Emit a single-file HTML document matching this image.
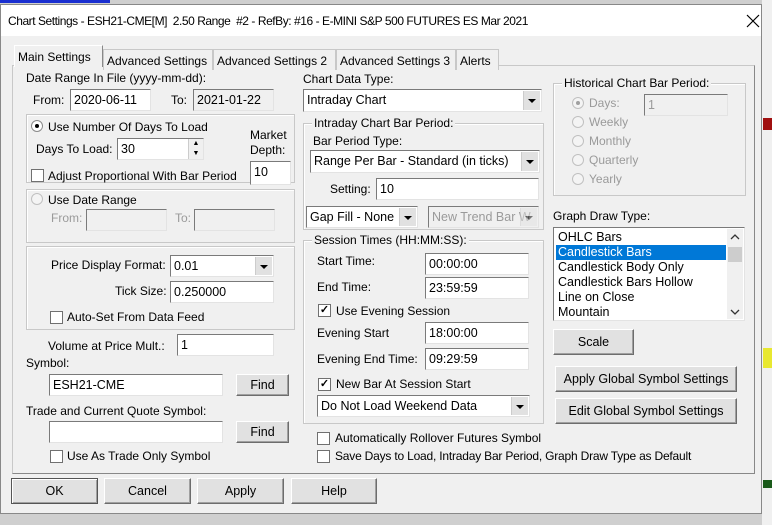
<!DOCTYPE html>
<html><head><meta charset="utf-8"><style>
*{box-sizing:border-box;margin:0;padding:0}
body{width:772px;height:525px;overflow:hidden;background:#cfcfcf;font-family:"Liberation Sans",sans-serif;font-size:12px;color:#000;position:relative}
.a{position:absolute;white-space:nowrap}
.dlg{position:absolute;left:0;top:4px;width:762px;height:510px;background:#f0f0f0;border:1px solid #888}
.tb{position:absolute;left:0;top:0;width:760px;height:31px;background:#fff}
.in{position:absolute;background:#fff;border:1px solid;border-color:#7a7a7a #e3e3e3 #e3e3e3 #7a7a7a;padding:3px 0 0 3px;font-size:12.5px;white-space:nowrap}
.dis{background:#f0f0f0}
.btn{position:absolute;background:#e1e1e1;border:1px solid;border-color:#fff #6d6d6d #6d6d6d #fff;box-shadow:inset -1px -1px #a0a0a0;text-align:center;font-size:12.5px;white-space:nowrap}
.grp{position:absolute;border:1px solid #c8c8c8;box-shadow:1px 1px #fff inset}
.gl{position:absolute;top:-8px;left:8px;background:#f0f0f0;padding:0 2px;white-space:nowrap}
.cb{position:absolute;width:13px;height:13px;background:#fff;border:1px solid #707070;font-size:11px;line-height:11px;text-align:center;font-weight:bold}
.rd{position:absolute;width:12px;height:12px;border-radius:50%;background:#fff;border:1px solid #8a8a8a}
.rd.on:after{content:"";position:absolute;left:3px;top:3px;width:4px;height:4px;border-radius:50%;background:#000}
.rd.g{background:#f4f4f4;border-color:#c0c0c0}
.rd.g.on:after{background:#a0a0a0}
.dd{position:absolute;right:1px;top:1px;bottom:1px;width:17px;background:#e1e1e1;border-left:1px solid #ccc}
.dd:after{content:"";position:absolute;left:4px;top:8px;border:4px solid transparent;border-top:4px solid #000;border-bottom:0}
.gr{color:#9a9a9a}
.tab{position:absolute;top:44px;height:21px;border:1px solid #c8c8c8;border-bottom:none;background:#f0f0f0;padding:4px 0 0 3px;white-space:nowrap;overflow:hidden}
</style></head><body>
<div class="a" style="left:0;top:0;width:110px;height:3px;background:#1a2fd0"></div>
<div class="a" style="left:762px;top:0;width:10px;height:525px;background:#f0f0f0"></div>
<div class="a" style="left:763px;top:118px;width:9px;height:12px;background:#a01010"></div>
<div class="a" style="left:763px;top:348px;width:9px;height:20px;background:#e8e830"></div>
<div class="a" style="left:763px;top:480px;width:9px;height:8px;background:#1a5a1a"></div>
<div class="dlg">
<div class="tb"></div>
<div class="a" style="left:7px;top:9px;font-size:12px;letter-spacing:-0.45px">Chart Settings - ESH21-CME[M]&nbsp; 2.50 Range&nbsp; #2 - RefBy: #16 - E-MINI S&amp;P 500 FUTURES ES Mar 2021</div>
<svg class="a" style="left:745px;top:9px" width="14" height="14"><path d="M1 1L13 13M13 1L1 13" stroke="#000" stroke-width="1.2"/></svg>

<div class="a" style="left:11px;top:60px;width:743px;height:409px;border:1px solid #c8c8c8;border-right-color:#888;border-bottom-color:#888"></div>
<div class="tab" style="left:102px;width:110px">Advanced Settings</div>
<div class="tab" style="left:212px;width:123px">Advanced Settings 2</div>
<div class="tab" style="left:335px;width:120px">Advanced Settings 3</div>
<div class="tab" style="left:455px;width:43px">Alerts</div>
<div class="tab" style="left:13px;top:40px;height:22px;width:89px;border-color:#fff #888 #f0f0f0 #fff;padding-top:4px">Main Settings</div>

<!-- left column -->
<div class="a" style="left:25px;top:66px">Date Range In File (yyyy-mm-dd):</div>
<div class="a" style="left:32px;top:88px">From:</div>
<div class="in" style="left:69px;top:84px;width:81px;height:22px">2020-06-11</div>
<div class="a" style="left:170px;top:88px">To:</div>
<div class="in dis" style="left:192px;top:84px;width:81px;height:22px">2021-01-22</div>

<div class="grp" style="left:25px;top:109px;width:269px;height:69px"></div>
<div class="rd on" style="left:30px;top:115px"></div>
<div class="a" style="left:47px;top:115px">Use Number Of Days To Load</div>
<div class="a" style="left:35px;top:137px">Days To Load:</div>
<div class="in" style="left:116px;top:133px;width:87px;height:22px">30</div>
<div class="a" style="left:187px;top:134px;width:15px;height:20px;background:#f0f0f0;border-left:1px solid #ccc;font-size:7px;line-height:10px;text-align:center">▲<br>▼</div>
<div class="a" style="left:249px;top:123px;line-height:15px">Market<br>Depth:</div>
<div class="cb" style="left:30px;top:164px"></div>
<div class="a" style="left:47px;top:164px">Adjust Proportional With Bar Period</div>
<div class="in" style="left:249px;top:156px;width:41px;height:24px">10</div>

<div class="grp" style="left:25px;top:184px;width:269px;height:54px"></div>
<div class="rd g" style="left:30px;top:188px"></div>
<div class="a" style="left:47px;top:188px">Use Date Range</div>
<div class="a gr" style="left:50px;top:206px">From:</div>
<div class="in dis" style="left:85px;top:204px;width:81px;height:22px"></div>
<div class="a gr" style="left:174px;top:206px">To:</div>
<div class="in dis" style="left:193px;top:204px;width:81px;height:22px"></div>

<div class="grp" style="left:25px;top:241px;width:269px;height:84px"></div>
<div class="a" style="left:50px;top:253px">Price Display Format:</div>
<div class="in" style="left:169px;top:250px;width:104px;height:22px">0.01<div class="dd"></div></div>
<div class="a" style="left:114px;top:279px">Tick Size:</div>
<div class="in" style="left:169px;top:276px;width:104px;height:22px">0.250000</div>
<div class="cb" style="left:49px;top:306px"></div>
<div class="a" style="left:66px;top:305px">Auto-Set From Data Feed</div>

<div class="a" style="left:47px;top:334px">Volume at Price Mult.:</div>
<div class="in" style="left:176px;top:329px;width:97px;height:22px">1</div>
<div class="a" style="left:25px;top:351px">Symbol:</div>
<div class="in" style="left:48px;top:369px;width:174px;height:22px">ESH21-CME</div>
<div class="btn" style="left:235px;top:369px;width:53px;height:22px;padding-top:3px">Find</div>
<div class="a" style="left:25px;top:399px">Trade and Current Quote Symbol:</div>
<div class="in" style="left:48px;top:416px;width:174px;height:22px"></div>
<div class="btn" style="left:235px;top:416px;width:53px;height:22px;padding-top:3px">Find</div>
<div class="cb" style="left:49px;top:445px"></div>
<div class="a" style="left:66px;top:444px">Use As Trade Only Symbol</div>

<!-- middle column -->
<div class="a" style="left:302px;top:67px">Chart Data Type:</div>
<div class="in" style="left:302px;top:84px;width:239px;height:23px">Intraday Chart<div class="dd"></div></div>
<div class="grp" style="left:302px;top:118px;width:241px;height:107px"><span class="gl">Intraday Chart Bar Period:</span></div>
<div class="a" style="left:312px;top:129px">Bar Period Type:</div>
<div class="in" style="left:309px;top:145px;width:230px;height:23px">Range Per Bar - Standard (in ticks)<div class="dd"></div></div>
<div class="a" style="left:329px;top:177px">Setting:</div>
<div class="in" style="left:375px;top:173px;width:163px;height:22px">10</div>
<div class="in" style="left:305px;top:201px;width:112px;height:22px">Gap Fill - None<div class="dd"></div></div>
<div class="in dis gr" style="left:427px;top:201px;width:111px;height:22px;overflow:hidden">New Trend Bar W<div class="dd" style="opacity:.5"></div></div>

<div class="grp" style="left:302px;top:235px;width:241px;height:184px"><span class="gl">Session Times (HH:MM:SS):</span></div>
<div class="a" style="left:316px;top:249px">Start Time:</div>
<div class="in" style="left:424px;top:248px;width:104px;height:22px">00:00:00</div>
<div class="a" style="left:316px;top:275px">End Time:</div>
<div class="in" style="left:424px;top:272px;width:104px;height:22px">23:59:59</div>
<div class="cb" style="left:317px;top:299px">✓</div>
<div class="a" style="left:335px;top:299px">Use Evening Session</div>
<div class="a" style="left:316px;top:321px">Evening Start</div>
<div class="in" style="left:424px;top:317px;width:104px;height:22px">18:00:00</div>
<div class="a" style="left:316px;top:347px">Evening End Time:</div>
<div class="in" style="left:424px;top:343px;width:104px;height:22px">09:29:59</div>
<div class="cb" style="left:317px;top:373px">✓</div>
<div class="a" style="left:335px;top:372px">New Bar At Session Start</div>
<div class="in" style="left:316px;top:390px;width:213px;height:22px">Do Not Load Weekend Data<div class="dd"></div></div>

<div class="cb" style="left:316px;top:427px"></div>
<div class="a" style="left:334px;top:426px">Automatically Rollover Futures Symbol</div>
<div class="cb" style="left:316px;top:445px"></div>
<div class="a" style="left:334px;top:444px;letter-spacing:-0.2px">Save Days to Load, Intraday Bar Period, Graph Draw Type as Default</div>

<!-- right column -->
<div class="grp" style="left:552px;top:78px;width:193px;height:113px"><span class="gl">Historical Chart Bar Period:</span></div>
<div class="rd g on" style="left:571px;top:92px"></div><div class="a gr" style="left:588px;top:91px">Days:</div>
<div class="in dis gr" style="left:643px;top:89px;width:84px;height:22px">1</div>
<div class="rd g" style="left:571px;top:111px"></div><div class="a gr" style="left:588px;top:110px">Weekly</div>
<div class="rd g" style="left:571px;top:130px"></div><div class="a gr" style="left:588px;top:129px">Monthly</div>
<div class="rd g" style="left:571px;top:149px"></div><div class="a gr" style="left:588px;top:148px">Quarterly</div>
<div class="rd g" style="left:571px;top:168px"></div><div class="a gr" style="left:588px;top:167px">Yearly</div>

<div class="a" style="left:552px;top:204px">Graph Draw Type:</div>
<div class="in" style="left:552px;top:222px;width:192px;height:94px;padding:2px 0 0 2px;line-height:15px">
<div style="padding-left:2px">OHLC Bars</div>
<div style="padding-left:2px;background:#0078d7;color:#fff;width:170px">Candlestick Bars</div>
<div style="padding-left:2px">Candlestick Body Only</div>
<div style="padding-left:2px">Candlestick Bars Hollow</div>
<div style="padding-left:2px">Line on Close</div>
<div style="padding-left:2px">Mountain</div>
<div class="a" style="right:1px;top:1px;width:16px;height:90px;background:#f0f0f0">
<svg class="a" style="left:3px;top:5px" width="10" height="6"><path d="M1 5L5 1L9 5" stroke="#333" fill="none" stroke-width="1.3"/></svg>
<div class="a" style="top:18px;left:1px;width:14px;height:15px;background:#cdcdcd"></div>
<svg class="a" style="left:3px;top:80px" width="10" height="6"><path d="M1 1L5 5L9 1" stroke="#333" fill="none" stroke-width="1.3"/></svg>
</div>
</div>
<div class="btn" style="left:552px;top:324px;width:81px;height:26px;padding-top:5px">Scale</div>
<div class="btn" style="left:554px;top:361px;width:182px;height:26px;padding-top:5px">Apply Global Symbol Settings</div>
<div class="btn" style="left:554px;top:393px;width:182px;height:26px;padding-top:5px">Edit Global Symbol Settings</div>

<!-- bottom buttons -->
<div class="btn" style="left:10px;top:473px;width:87px;height:26px;padding-top:5px;border:1px solid #555;box-shadow:inset 1px 1px #fff,inset -1px -1px #a0a0a0">OK</div>
<div class="btn" style="left:103px;top:473px;width:87px;height:26px;padding-top:5px">Cancel</div>
<div class="btn" style="left:196px;top:473px;width:87px;height:26px;padding-top:5px">Apply</div>
<div class="btn" style="left:290px;top:473px;width:86px;height:26px;padding-top:5px">Help</div>
</div>
</body></html>
